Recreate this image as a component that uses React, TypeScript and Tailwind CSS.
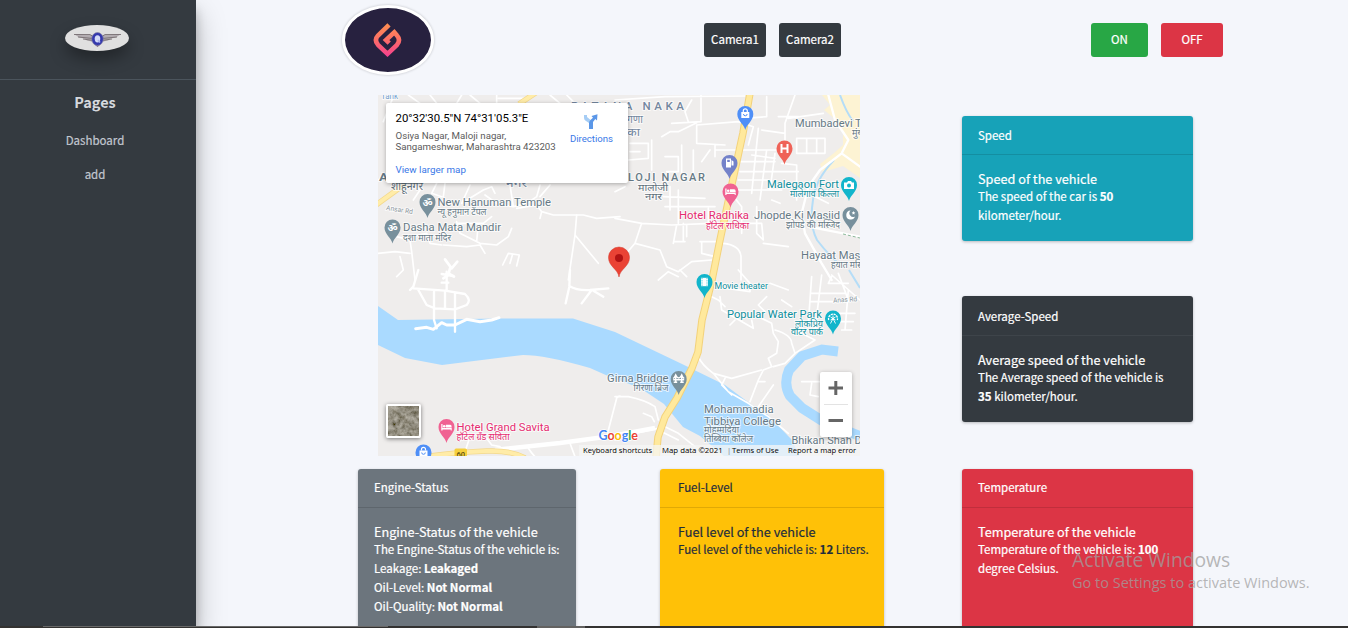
import type { ReactNode } from "react";

const CJK = "font-['Noto_Sans_CJK_SC','Noto_Sans',sans-serif]";

function SideLogo() {
  return (
    <svg width="64" height="26" viewBox="0 0 64 26" className="rounded-[50%] bg-[#e0e0e0] shadow-[0_8px_16px_rgba(0,0,0,0.35)]">
      <path d="M9 9 L27 10 L29 17 L22 15.500 L19 13.500 L14 12.500Z" fill="#b3adb1" />
      <path d="M56 9 L38 10 L36 17 L43 15.500 L46 13.500 L51 12.500Z" fill="#b3adb1" />
      <path d="M9 9.500 L25 9.500 L29 12 M13 12 L28 13.500 M18 14 L28 15.500 M56 9.500 L40 9.500 L36 12 M52 12 L37 13.500 M47 14 L37 15.500" fill="none" stroke="#6d6468" strokeWidth=".8" />
      <path d="M29 19 L32.500 22 L36 19Z" fill="#77617a" />
      <ellipse cx="32.500" cy="14" rx="5.800" ry="6.500" fill="#3438ad" stroke="#8584a8" strokeWidth=".7" />
      <ellipse cx="32.500" cy="13.800" rx="2.800" ry="3.600" fill="#d3daf8" />
      <path d="M33 15 L35 17.500" stroke="#aab2ee" strokeWidth="1.600" />
    </svg>
  );
}

function BrandLogo() {
  return (
    <svg width="92" height="70" viewBox="0 0 86 64" className="rounded-[50%] border-[3px] border-white bg-[#27213f] shadow-[0_0_2px_1px_rgba(0,0,0,0.1)]">
      <defs>
        <linearGradient id="flame" gradientUnits="userSpaceOnUse" x1="0" y1="15" x2="0" y2="48">
          <stop offset="0" stopColor="#fd9150" />
          <stop offset=".5" stopColor="#fb6e66" />
          <stop offset="1" stopColor="#f5418f" />
        </linearGradient>
      </defs>
      <path d="M44 16.800 L33 27.500 Q28.800 32 33 36.800 L42.500 45.800 L52 36.800 Q56 32 52 27.500 L49.300 24.300 L41 32 L44.200 35.200" fill="none" stroke="url(#flame)" strokeWidth="4.600" strokeLinejoin="miter" />
    </svg>
  );
}

type PinProps = { x: number; y: number; color: string; children?: ReactNode };

function Pin({ x, y, color, children }: PinProps) {
  return (
    <g transform={`translate(${x} ${y})`}>
      <path d="M0 16 C-1.200 10 -8 7 -8 0 A8 8 0 1 1 8 0 C8 7 1.200 10 0 16Z" fill={color} />
      {children}
    </g>
  );
}

function Bag() {
  return (
    <g>
      <path d="M-4 -2 H4 V4 H-4Z" fill="#fff" />
      <path d="M-2 -2 V-3.200 A2 2 0 0 1 2 -3.200 V-2" fill="none" stroke="#fff" strokeWidth="1.200" />
      <path d="M-1.800 0 A1.800 1.800 0 0 0 1.800 0" fill="none" stroke="#4f8ff7" />
    </g>
  );
}

function Bed() {
  return (
    <g fill="#fff">
      <path d="M-5.200 -3 H-4 V1 H5.200 V3.500 H4.200 V2.400 H-4 V3.500 H-5.200Z" />
      <circle cx="-2.300" cy="-.8" r="1.300" />
      <path d="M-.6 -2.200 H3.600 Q5.200 -2.200 5.200 0 V.6 H-.6Z" />
    </g>
  );
}

type LabelProps = { x: number; y: number; w: number; size: number; fill?: string; weight?: number; spaced?: boolean; children: string };

function Label({ x, y, w, size, fill = "#667985", weight = 400, spaced = false, children }: LabelProps) {
  return (
    <text
      x={x}
      y={y}
      textLength={w}
      lengthAdjust={spaced ? "spacing" : "spacingAndGlyphs"}
      fontSize={size}
      fontWeight={weight}
      fill={fill}
      stroke="#ffffff"
      strokeWidth="2"
      strokeOpacity=".7"
      paintOrder="stroke"
      strokeLinejoin="round"
    >
      {children}
    </text>
  );
}

function MapDrawing() {
  return (
    <svg width="482" height="361" viewBox="378 95 482 361" className="block font-[Roboto,'Noto_Sans',sans-serif]">
      <rect x="378" y="95" width="482" height="361" fill="#efedec" />
      <path d="M822 95 L830 105 L824 110 L835 119 L843 131 L843 145 L834 153 L820 164 L823 172 L843 166 L860 178 V95Z" fill="#fdf3d3" />
      <path d="M378 306 L398 320 L500 318.500 H573 L615 332 L682 364 L725 385 L752 405 L766 413 L792 440 L799 456 H724 L700 436 L683 427 L664 404 L640 388 L608 376 L590 368 Q545 355 523 355 L442 365 L405 358 L378 345Z" fill="#aadaff" />
      <path d="M838 351.500 L822 349.500 L802 356 L789 370 Q783 384 790 396 L802 408 L824 422 L860 436" fill="none" stroke="#aadaff" strokeWidth="10" />
      <path d="M840 95 Q846 112 853 121 M834 160 Q815 180 813 200 Q809 225 817 240 Q826 252 837 262 M849 270 L860 288" fill="none" stroke="#b5ddf7" strokeWidth="2" />

      <g fill="none" stroke="#fff" strokeWidth="5" strokeLinejoin="round" strokeLinecap="round">
        <g transform="translate(370 90) scale(.33333)">
          <path d="M40 95 L70 20 M115 15 L150 40 M180 15 L200 40 M275 15 L260 40 M300 15 L330 40 M380 15 V40 M385 25 H470 M540 15 L570 40 M590 15 L610 35" />
          <path d="M24 270 L80 250 M130 280 L150 300 L130 330 M200 280 L185 310 L215 320 M225 280 L220 320 M275 340 L300 285 M275 340 L340 300 L365 290 L375 310 M345 315 L380 340 L430 350 L470 340 L500 320 M430 350 L420 285 M500 320 L510 285 M510 320 L540 285 M440 355 L500 345 L515 365 L510 385 M515 365 L550 375 L640 375 L680 385 L750 380" />
          <path d="M75 410 L80 440 L120 450 L125 485 L135 570 M24 490 L75 485 L120 490 M90 500 L100 540 L80 560 M125 440 L170 430 L180 460 L215 465 M260 395 L270 430 L330 460 L380 465 L415 440 L425 415 M325 400 L320 455 M220 465 L290 470 L330 465 L345 490 M265 400 L340 400 L365 380 M398 525 L415 490 L448 495 L440 528 M428 492 L420 520 M620 375 L615 435 L685 520 M615 435 L595 570" />
          <path d="M225 508 L245 535 L262 515 M240 535 L235 555 L220 565 M238 552 L252 560" strokeWidth="8" />
        </g>
        <g transform="translate(615 90) scale(.33333)">
          <path d="M0 30 L150 20 L390 18 M258 15 V95 L170 100 M230 30 L210 65 L220 95 M245 105 L370 95 L415 110 L400 165 M245 105 V160 L330 165 M140 140 L165 125 H190 L245 98 M300 180 H500 M300 165 V200 M285 180 L260 215 M455 20 V80 L390 85 M540 15 L510 100 V190 M490 80 H550 M520 85 L625 70 M430 115 L410 310 M440 120 L510 130 M375 215 H480 M375 245 H550 M370 270 H460 M370 300 H500 M455 180 L435 330 M480 190 L465 300 M500 220 L545 225 V330 M410 195 L480 205 M545 145 H630 V190 H545Z M575 145 V190 M605 145 V190" />
          <path d="M45 160 H100 V205 L40 210 M45 185 H75 M110 150 V240 M150 200 H190 V245 H155 M200 165 V260 M235 180 V250 M145 320 L270 325 M165 290 V360 M190 300 V400 M150 350 H300 M0 305 L30 290 M0 385 L80 400 L170 405 L290 400 M280 355 V400 M205 400 V455 M185 405 L175 460 M215 405 V440 M180 455 H210 M80 400 L60 460 L0 530 M60 460 L135 480 L155 530 L190 545 L230 515 L290 510 M255 455 H310 M260 455 V490 L300 500 M325 460 Q375 465 378 500 V570 M360 325 L380 350 V430 M375 400 H440 L445 450 L425 430 V350 M445 460 L520 470 M470 330 L495 340 M560 310 L590 315 L640 340" />
          <path d="M640 15 L660 90 L700 150 L680 190 L615 240 L580 290 L560 370 L570 430 L620 520 L650 570 M680 190 L735 230 M580 410 L735 440" strokeWidth="7" />
        </g>
        <g transform="translate(370 270) scale(.33333)">
          <path d="M145 0 L130 50 L120 60 M130 55 L225 62 L285 72 Q305 90 290 105 L255 118 L195 115 L170 105 L145 60 M225 62 L225 115 M255 68 V185 M192 65 V150 L200 175 M230 5 V60 M215 12 L250 18 M215 38 H235 M600 0 L598 50 L587 100 M598 48 Q620 62 660 60 L715 55 M665 60 L635 100 M670 62 L700 80" strokeWidth="7" />
          <path d="M137 176 L170 172 L190 178 L215 158 L230 165 L255 165 L290 148 L330 155 L365 150 L387 143" strokeWidth="9" />
          <path d="M300 500 L280 560 M350 505 L365 525 L390 530 M475 535 Q485 550 495 560 M600 520 L615 560 M710 500 L740 385 Q740 380 750 378" />
        </g>
        <g transform="translate(615 270) scale(.33333)">
          <path d="M130 30 L160 5 L190 20 M195 0 L215 20 M290 80 L310 90 L330 110 M370 0 L405 40 V65 L300 50 M315 80 L320 120 L415 175 L410 150 M345 165 L360 150 M410 130 L470 160 L475 190 L490 215 L485 250 L460 265 L470 290 L445 300 L430 330 L405 395 M480 180 Q530 195 530 220 L540 250 L510 280 L475 290 M465 40 L520 60 M455 80 L430 105 L450 125 M500 90 L530 110 M550 185 L600 210 L540 250" />
          <path d="M250 260 Q260 285 295 310 L350 325 L440 300 M295 310 L340 365 L400 400 L460 440 L520 490 M330 325 L320 345 L350 375 M430 335 H450 M475 345 L430 410" />
          <path d="M590 20 L580 160 M620 15 L600 180 M650 20 L640 40 L700 40 M670 10 L700 90 M590 70 H690 M585 95 H700 M640 130 H720 M670 155 H715 M680 180 H710 M700 60 L690 180 M650 15 L735 90 M560 335 H620 M590 340 L585 375 L610 380 M670 510 L700 530" />
          <path d="M0 380 L40 380 Q90 390 120 410 L130 450 M85 430 L110 440 L118 455 M0 510 L60 490 L130 475 M150 470 L190 490 L240 530 M140 485 L190 510" />
        </g>
      </g>
      <path d="M843 234 L860 238" stroke="#8db99a" strokeDasharray="3 2" />
      <path d="M495 450 L560 443 L612 436 L655 428" stroke="#fff" strokeWidth="4.500" fill="none" />
      <g fill="none" strokeLinejoin="round">
        <path d="M750 93 L743 133 L730 193 L720 240 L712 280 L702 320 L698 352 L692 368 L677 398 L665 417 L658 437 L656 458" stroke="#f3d27b" strokeWidth="7.500" />
        <path d="M750 93 L743 133 L730 193 L720 240 L712 280 L702 320 L698 352 L692 368 L677 398 L665 417 L658 437 L656 458" stroke="#ffe99d" strokeWidth="5.500" />
        <path d="M376 205 L405 184 M519 104 L540 90 M430 456 Q460 452 487 451 Q510 450 525 458" stroke="#f3d88c" strokeWidth="5.500" />
        <path d="M376 205 L405 184 M519 104 L540 90 M430 456 Q460 452 487 451 Q510 450 525 458" stroke="#ffeca8" strokeWidth="4" />
      </g>

      <Label x={381} y={99} w={17} size={9} fill="#72a1cf">Tank</Label>
      <Label x={571} y={110} w={113} size={11.500} fill="#74879f" weight={500} spaced>PATANA NAKA</Label>
      <Label x={627} y={123} w={16} size={11} fill="#74879f">गणा</Label>
      <Label x={627} y={136} w={13} size={11} fill="#74879f">का</Label>
      <Label x={379} y={181} w={9} size={11.500} weight={700}>A</Label>
      <Label x={391} y={190} w={32} size={10.500} fill="#5f707b">शाहूनगर</Label>
      <Label x={506} y={187} w={21} size={11} fill="#74879f">नगर</Label>
      <Label x={628} y={181} w={77} size={11} weight={500} spaced>LOJI NAGAR</Label>
      <Label x={638} y={190.500} w={30} size={10} fill="#5f707b">मालोजी</Label>
      <Label x={645} y={200} w={17} size={10} fill="#5f707b">नगर</Label>
      <g transform="rotate(9 399 210)"><Label x={386} y={212} w={27} size={7} fill="#8b979e">Ansar Rd</Label></g>
      <Label x={437.500} y={206} w={113.500} size={11.500}>New Hanuman Temple</Label>
      <Label x={437.500} y={215} w={49} size={9}>न्यू हनुमान टेंपल</Label>
      <Label x={403} y={231} w={98} size={11.500}>Dasha Mata Mandir</Label>
      <Label x={403} y={240.500} w={48} size={9}>दशा माता मंदिर</Label>
      <Label x={795} y={127} w={72} size={11.500}>Mumbadevi Te</Label>
      <Label x={852} y={135.500} w={18} size={9}>मुंबादे</Label>
      <Label x={767} y={188} w={72} size={11.500} fill="#0f8f9d">Malegaon Fort</Label>
      <Label x={790} y={197} w={49} size={9} fill="#0f8f9d">मालेगाव किल्ला</Label>
      <Label x={754} y={218.500} w={86} size={11.500}>Jhopde Ki Masjid</Label>
      <Label x={786} y={228} w={54} size={9}>झोपडे की मस्जिद</Label>
      <Label x={679} y={219} w={70} size={11.500} fill="#e52c70">Hotel Radhika</Label>
      <Label x={706} y={228.500} w={43} size={9} fill="#e52c70">हॉटेल राधिका</Label>
      <Label x={801} y={259} w={71} size={11.500}>Hayaat Masjid</Label>
      <Label x={831} y={267.500} w={36} size={9}>हयात मस्जि</Label>
      <Label x={714.500} y={288.500} w={53.500} size={9} fill="#0f8f9d">Movie theater</Label>
      <Label x={727} y={317.500} w={95} size={11.500} fill="#0f8f9d">Popular Water Park</Label>
      <Label x={795} y={326.500} w={28} size={9} fill="#0f8f9d">लोकप्रिय</Label>
      <Label x={791} y={335} w={32} size={9} fill="#0f8f9d">वॉटर पार्क</Label>
      <g transform="rotate(-4 845 299)"><Label x={833} y={302} w={24} size={7} fill="#8b979e">Anas Rd</Label></g>
      <Label x={607} y={382} w={61.500} size={11}>Girna Bridge</Label>
      <Label x={633.500} y={391} w={35} size={9}>गिरणा ब्रिज</Label>
      <Label x={704} y={413} w={69.500} size={11.500}>Mohammadia</Label>
      <Label x={704} y={424.500} w={77} size={11.500}>Tibbiya College</Label>
      <Label x={704} y={433} w={35} size={9}>मोहम्मदिया</Label>
      <Label x={704} y={441.500} w={49} size={9}>तिब्बिया कॉलेज</Label>
      <Label x={791.500} y={444} w={76} size={11}>Bhikan Shah Da</Label>
      <Label x={456.500} y={431} w={93} size={11.500} fill="#e52c70">Hotel Grand Savita</Label>
      <Label x={456.500} y={439.500} w={53} size={9} fill="#e52c70">हॉटेल ग्रॅंड सविता</Label>

      <Pin x={745.300} y={114} color="#4f8ff7"><Bag /></Pin>
      <Pin x={784.500} y={148.500} color="#ef6257"><path d="M-3 -4.500 V4.500 M3 -4.500 V4.500 M-3.500 0 H3.500" stroke="#fff" strokeWidth="2" /></Pin>
      <Pin x={729.500} y={163} color="#7482c9">
        <path d="M-3.500 -4.500 H1.500 V4.500 H-3.500Z M2 -3 L4 -1.500 V2.500 H2" fill="#fff" />
        <path d="M-2.300 -3.200 H.3 V-1 H-2.300Z" fill="#7482c9" />
      </Pin>
      <Pin x={730.500} y={191.500} color="#f06292"><Bed /></Pin>
      <Pin x={849} y={185} color="#12b5cb">
        <path d="M-5 -2.500 H-2 L-1 -4 H2 L3 -2.500 H5 V4 H-5Z" fill="#fff" />
        <circle cy=".6" r="2" fill="#12b5cb" />
      </Pin>
      <Pin x={850.500} y={215} color="#78909c"><path d="M0 -4.500 A4.500 4.500 0 1 0 4.500 1.500 A3.800 3.800 0 0 1 0 -4.500Z M3 -4 l.6 1.200 1.300 .2 -1 .9 .2 1.300 -1.100 -.7 -1.100 .7 .2 -1.300 -1 -.9 1.300 -.2Z" fill="#fff" /></Pin>
      <Pin x={427.500} y={202} color="#78909c"><text x="-5" y="3.500" textLength="10" fontSize="10" fontWeight="700" fill="#fff">ॐ</text></Pin>
      <Pin x={392.500} y={227.500} color="#78909c"><text x="-5" y="3.500" textLength="10" fontSize="10" fontWeight="700" fill="#fff">ॐ</text></Pin>
      <Pin x={704.500} y={282} color="#12b5cb">
        <path d="M-3.500 -4.200 H3.500 V4.200 H-3.500Z" fill="#fff" />
        <path d="M-2.500 -4 V4 M2.500 -4 V4" stroke="#12b5cb" strokeWidth=".8" strokeDasharray="1.200 1" />
      </Pin>
      <Pin x={833} y={318.500} color="#12b5cb">
        <path d="M-4.300 1.500 A4.500 4.500 0 1 1 4.300 1.500" fill="none" stroke="#fff" strokeWidth="1.300" strokeDasharray="2.200 .7" />
        <path d="M0 -3 V1 M-2.500 -1.500 L2.500 1.500 M2.500 -1.500 L-2.500 1.500 M0 0 L-2.500 5 M0 0 L2.500 5" stroke="#fff" strokeWidth=".9" />
      </Pin>
      <Pin x={678.700} y={379} color="#78909c">
        <path d="M-5.500 .8 H5.500 M-3 -4.500 V4 M3 -4.500 V4 M-5.500 -.5 Q-4 -1.500 -3 -4 Q0 2 3 -4 Q4 -1.500 5.500 -.5" fill="none" stroke="#fff" strokeWidth="1.500" />
        <path d="M-5 3.300 H-1.500 M1.500 3.300 H5" stroke="#fff" strokeWidth="1.500" />
      </Pin>
      <Pin x={446.500} y={427} color="#f06292"><Bed /></Pin>
      <Pin x={423.500} y={452.500} color="#4f8ff7"><Bag /></Pin>
      <rect x="454.500" y="448.500" width="12.500" height="12" rx="1.500" fill="#f6d03c" />
      <text x="456.500" y="457" fontSize="7.500" textLength="8.500" fontWeight="500" fill="#5a4b10">60</text>

      <path d="M619 277 C618 269 608.500 266.500 608.500 257.500 A10.500 10.500 0 0 1 629.500 257.500 C629.500 266.500 620 269 619 277Z" fill="#ea4335" stroke="#d33b2c" strokeWidth=".5" />
      <circle cx="619" cy="258" r="4" fill="#b11313" />

      <text x="598.500" y="439.500" fontSize="12.500" fontWeight="700" textLength="39.500" stroke="#fff" strokeWidth="1.500" paintOrder="stroke" className="font-[Lato,sans-serif]">
        <tspan fill="#4285f4">G</tspan><tspan fill="#ea4335">o</tspan><tspan fill="#fbbc05">o</tspan><tspan fill="#4285f4">g</tspan><tspan fill="#34a853">l</tspan><tspan fill="#ea4335">e</tspan>
      </text>
    </svg>
  );
}

function MapPanel() {
  return (
    <section className="relative h-[361px] w-[482px] overflow-hidden font-[Roboto,sans-serif]">
      <MapDrawing />
      <div className="absolute left-2 top-2 flex h-20 w-[242px] justify-between rounded-[2px] bg-white pl-[9.500px] pr-[15px] shadow-[0_1px_4px_rgba(0,0,0,0.3)]">
        <div className="pt-2">
          <p className="whitespace-nowrap text-[11.400px] leading-[15px] text-black">20°32'30.5"N 74°31'05.3"E</p>
          <p className="mt-1 whitespace-nowrap text-[9.700px] leading-[11px] text-[#5b5b5b]">Osiya Nagar, Maloji nagar,<br />Sangameshwar, Maharashtra 423203</p>
          <p className="mt-3 text-[9.800px] leading-[11px] text-[#3a78e7]">View larger map</p>
        </div>
        <div className="flex flex-col items-center pt-2.5">
          <svg width="16" height="17" viewBox="0 0 16 17">
            <path d="M1 2 V5 Q1 7 3 8 L6 10 V16 H10 V9 L4 4 V2Z" fill="#a6cdf5" />
            <path d="M6 16 V10 Q6 8 8 6.500 L10 4.800 L8.500 3 L14.500 1.200 L14 7.500 L12.300 6 L10 9 V16Z" fill="#5b97e8" />
          </svg>
          <p className="mt-[3px] text-[9.600px] leading-[11px] text-[#3a78e7]">Directions</p>
        </div>
      </div>
      <div className="absolute left-2 top-[309px] h-[34px] w-[35px] rounded-[2px] border-2 border-white shadow-[0_1px_4px_rgba(0,0,0,0.5)]">
        <svg width="31" height="30" viewBox="0 0 31 30">
          <defs>
            <filter id="terrain" x="0" y="0" width="100%" height="100%">
              <feTurbulence type="fractalNoise" baseFrequency=".2" numOctaves="4" seed="8" />
              <feColorMatrix values=".5 .25 0 0 -.08  .48 .25 0 0 -.09  .45 .25 0 0 -.13  0 0 0 0 1" />
            </filter>
          </defs>
          <rect width="31" height="30" filter="url(#terrain)" />
        </svg>
      </div>
      <div className="absolute left-[442px] top-[277px] h-[65px] w-8 rounded-[2px] bg-white shadow-[0_1px_4px_rgba(0,0,0,0.3)]">
        <svg width="32" height="65" viewBox="0 0 32 65">
          <path d="M8.500 16 H23 M15.800 9 V23 M8.500 48.500 H23" stroke="#666" strokeWidth="3" />
          <path d="M4 32.500 H28" stroke="#e3e3e3" />
        </svg>
      </div>
      <div className="absolute bottom-0 right-0 flex h-[11px] w-[281px] items-center bg-[#f5f5f5]/75 pl-1 font-['Open_Sans',sans-serif] text-[7.600px] text-black">
        <span className="w-[79px] whitespace-nowrap">Keyboard shortcuts</span>
        <span className="w-[65px] whitespace-nowrap text-[7.800px]">Map data ©2021</span>
        <span className="w-[5px] text-[#777]">|</span>
        <span className="w-[56px] whitespace-nowrap">Terms of Use</span>
        <span className="whitespace-nowrap">Report a map error</span>
      </div>
    </section>
  );
}

type CardProps = { title: string; heading: string; className: string; children: ReactNode };

function StatusCard({ title, heading, className, children }: CardProps) {
  return (
    <article className={`shrink-0 rounded-[3px] text-[11.500px] shadow-[0_1px_3px_rgba(0,0,0,0.25)] [-webkit-text-stroke:0.2px] ${className}`}>
      <header className="h-[39px] border-b border-black/12 px-4 leading-[38px]">{title}</header>
      <div className="px-4 pt-[15px]">
        <h2 className="text-[12.700px] leading-[17px]">{heading}</h2>
        <p className="whitespace-nowrap leading-[19px]">{children}</p>
      </div>
    </article>
  );
}

function Button({ className, children }: { className: string; children: string }) {
  return <button className={`flex h-[34px] justify-center rounded-[3px] text-[11.500px] leading-[32px] text-white [-webkit-text-stroke:0.2px] ${className}`}>{children}</button>;
}

export default function App() {
  return (
    <div className={`relative flex h-[628px] w-[1348px] flex-col overflow-hidden bg-[#f4f6fb] ${CJK}`}>
      <div className="flex min-h-0 flex-1">
        <aside className="z-10 w-[196px] shrink-0 bg-[#343a40] text-center text-[#c2c7d0] shadow-[0_14px_28px_rgba(0,0,0,0.25),0_10px_10px_rgba(0,0,0,0.22)]">
          <div className="flex h-20 justify-center border-b border-[#4b545c] pr-0.5 pt-[25px]">
            <SideLogo />
          </div>
          <nav className="flex w-[190px] flex-col">
            <h1 className="mt-[11px] text-[14.500px] font-bold leading-[22px] text-[#d5d8de]">Pages</h1>
            <a className="mt-[18px] text-[11.500px] leading-[18px] [-webkit-text-stroke:0.2px]">Dashboard</a>
            <a className="mt-4 text-[11.500px] leading-[18px] [-webkit-text-stroke:0.2px]">add</a>
          </nav>
        </aside>
        <main className="flex flex-1 flex-col overflow-hidden">
          <header className="flex h-[95px] shrink-0 items-start pl-[146px] pt-[5px]">
            <BrandLogo />
            <div className="ml-[270px] mt-[18px] flex gap-[13px]">
              <Button className="w-[62px] bg-[#343a40]">Camera1</Button>
              <Button className="w-[62px] bg-[#343a40]">Camera2</Button>
            </div>
            <div className="ml-[250px] mt-[18px] flex gap-[13px]">
              <Button className="w-[57px] bg-[#28a745]">ON</Button>
              <Button className="w-[62px] bg-[#dc3545]">OFF</Button>
            </div>
          </header>
          <div className="flex shrink-0 gap-[102px] pl-[182px]">
            <MapPanel />
            <div className="flex w-[231px] flex-col gap-[55px] pt-[21px]">
              <StatusCard title="Speed" heading="Speed of the vehicle" className="h-[125px] bg-[#17a2b8] text-white">
                The speed of the car is <b>50</b><br />kilometer/hour.
              </StatusCard>
              <StatusCard title="Average-Speed" heading="Average speed of the vehicle" className="h-[126px] bg-[#343a40] text-white [&>header]:h-10 [&>header]:border-white/5 [&>header]:leading-10">
                The Average speed of the vehicle is<br /><b>35</b> kilometer/hour.
              </StatusCard>
            </div>
          </div>
          <div className="flex shrink-0 pl-[162px] pt-[13px]">
            <StatusCard title="Engine-Status" heading="Engine-Status of the vehicle" className="h-[170px] w-[218px] bg-[#6c757d] text-white [&>header]:leading-[36px]">
              The Engine-Status of the vehicle is:<br />Leakage: <b>Leakaged</b><br />Oil-Level: <b>Not Normal</b><br />Oil-Quality: <b>Not Normal</b>
            </StatusCard>
            <StatusCard title="Fuel-Level" heading="Fuel level of the vehicle" className="ml-[84px] h-[170px] w-[224px] bg-[#ffc107] text-[#1f2d3d] [&>*]:pl-[18px] [&>header]:leading-[36px]">
              Fuel level of the vehicle is: <b>12</b> Liters.
            </StatusCard>
            <StatusCard title="Temperature" heading="Temperature of the vehicle" className="ml-[78px] h-[170px] w-[231px] bg-[#dc3545] text-white [&>header]:leading-[36px]">
              Temperature of the vehicle is: <b>100</b><br />degree Celsius.
            </StatusCard>
          </div>
        </main>
      </div>
      <footer className="z-20 flex h-0.5 shrink-0 bg-[#333231]">
        <div className="ml-[43px] w-[345px] border-t border-[#686868]" />
        <div className="ml-[149px] w-12 bg-[#636261]" />
      </footer>
      <div className="absolute left-[1072px] top-[548px] z-30 whitespace-nowrap font-['Open_Sans',sans-serif] text-[#a0a0a0]/75">
        <p className="text-[19.300px] leading-[23px]">Activate Windows</p>
        <p className="mt-px text-[14.500px] leading-[22px]">Go to Settings to activate Windows.</p>
      </div>
    </div>
  );
}
